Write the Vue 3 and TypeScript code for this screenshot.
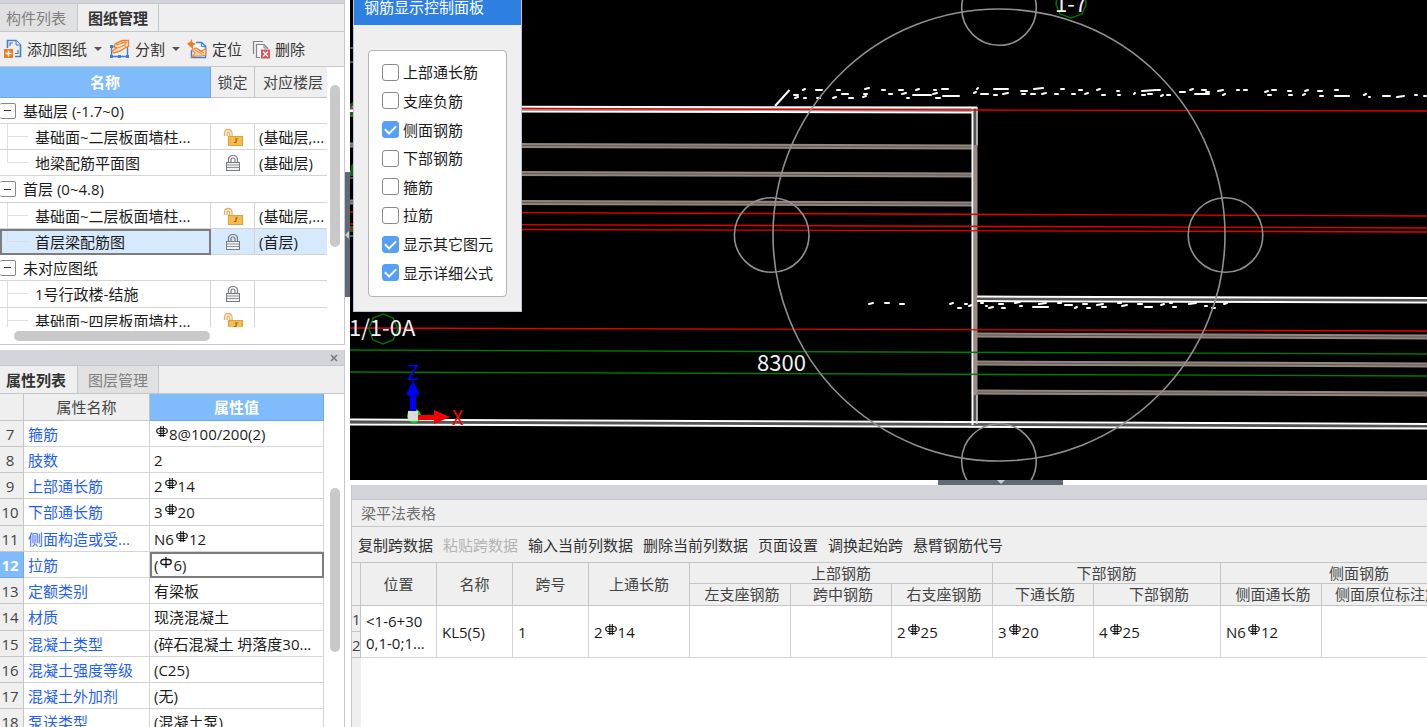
<script setup lang="ts">
import { ref } from 'vue'

interface TreeRow {
  kind: 'group' | 'leaf'
  name: string
  lock?: 'open' | 'closed'
  floor?: string
  last?: boolean
  selected?: boolean
}

const tree: TreeRow[] = [
  { kind: 'group', name: '基础层 (-1.7~0)' },
  { kind: 'leaf', name: '基础面~二层板面墙柱...', lock: 'open', floor: '(基础层,...' },
  { kind: 'leaf', name: '地梁配筋平面图', lock: 'closed', floor: '(基础层)', last: true },
  { kind: 'group', name: '首层 (0~4.8)' },
  { kind: 'leaf', name: '基础面~二层板面墙柱...', lock: 'open', floor: '(基础层,...' },
  { kind: 'leaf', name: '首层梁配筋图', lock: 'closed', floor: '(首层)', last: true, selected: true },
  { kind: 'group', name: '未对应图纸' },
  { kind: 'leaf', name: '1号行政楼-结施', lock: 'closed', floor: '' },
  { kind: 'leaf', name: '基础面~四层板面墙柱...', lock: 'open', floor: '' },
]

interface Prop {
  no: number
  name: string
  pre: string
  bar?: 'hrb' | 'hpb'
  post?: string
}

const props: Prop[] = [
  { no: 7, name: '箍筋', pre: '', bar: 'hrb', post: '8@100/200(2)' },
  { no: 8, name: '肢数', pre: '2' },
  { no: 9, name: '上部通长筋', pre: '2', bar: 'hrb', post: '14' },
  { no: 10, name: '下部通长筋', pre: '3', bar: 'hrb', post: '20' },
  { no: 11, name: '侧面构造或受...', pre: 'N6', bar: 'hrb', post: '12' },
  { no: 12, name: '拉筋', pre: '(', bar: 'hpb', post: '6)' },
  { no: 13, name: '定额类别', pre: '有梁板' },
  { no: 14, name: '材质', pre: '现浇混凝土' },
  { no: 15, name: '混凝土类型', pre: '(碎石混凝土 坍落度30...' },
  { no: 16, name: '混凝土强度等级', pre: '(C25)' },
  { no: 17, name: '混凝土外加剂', pre: '(无)' },
  { no: 18, name: '泵送类型', pre: '(混凝土泵)' },
]

const options = ref([
  { label: '上部通长筋', on: false },
  { label: '支座负筋', on: false },
  { label: '侧面钢筋', on: true },
  { label: '下部钢筋', on: false },
  { label: '箍筋', on: false },
  { label: '拉筋', on: false },
  { label: '显示其它图元', on: true },
  { label: '显示详细公式', on: true },
])

const actions = [
  { label: '复制跨数据', off: false },
  { label: '粘贴跨数据', off: true },
  { label: '输入当前列数据', off: false },
  { label: '删除当前列数据', off: false },
  { label: '页面设置', off: false },
  { label: '调换起始跨', off: false },
  { label: '悬臂钢筋代号', off: false },
]

const spanCells = [
  { pre: '2', post: '14' },
  { pre: '', post: '' },
  { pre: '', post: '' },
  { pre: '2', post: '25' },
  { pre: '3', post: '20' },
  { pre: '4', post: '25' },
  { pre: 'N6', post: '12' },
  { pre: '', post: '' },
]

// Rebar bands: [x1, y1, x2, y2] of the centre line
const bands = [
  [350, 145, 973, 147],
  [350, 173, 973, 175],
  [350, 202, 973, 204],
  [977, 335, 1427, 337],
  [977, 363, 1427, 365],
  [977, 392, 1427, 394],
]

const reds = [
  [350, 108, 976, 110],
  [976, 110, 1427, 111],
  [350, 212, 1427, 216],
  [350, 224, 1427, 228],
  [350, 229, 1427, 232],
  [350, 328, 1427, 331],
]

const greens = [
  [350, 350, 1427, 354],
  [350, 372, 1427, 376],
]

// Edge-on annotation text: [x, y, length]
const flecks = [
  [802, 90, 4], [815, 90, 8], [836, 90, 5], [864, 89, 6], [881, 90, 5], [898, 90, 6], [915, 90, 5], [933, 90, 4], [941, 89, 8], [976, 89, 3], [993, 89, 16], [1020, 91, 8], [1033, 89, 11], [1060, 89, 5], [1078, 90, 5], [1096, 90, 5], [1116, 91, 4],
  [793, 95, 6], [794, 98, 5], [803, 98, 4], [816, 98, 5], [832, 98, 5], [841, 94, 8], [848, 98, 6], [862, 97, 5], [863, 94, 5], [888, 94, 5], [901, 94, 6], [906, 98, 4], [912, 95, 20], [932, 94, 6], [942, 96, 18], [935, 98, 6], [973, 93, 4], [980, 94, 9], [993, 95, 5], [1002, 94, 7], [1021, 94, 5], [1030, 94, 6], [1041, 94, 6], [1054, 94, 5], [1071, 94, 5], [1084, 94, 5], [1101, 95, 5], [1117, 95, 4],
  [1141, 91, 16], [1156, 90, 5], [1179, 92, 7], [1189, 90, 5], [1201, 90, 6], [1205, 92, 5], [1217, 91, 7], [1236, 90, 4], [1243, 90, 5], [1264, 92, 5], [1271, 90, 6], [1287, 91, 5], [1304, 91, 5], [1317, 91, 6], [1334, 90, 5],
  [1133, 94, 3], [1141, 95, 5], [1147, 94, 6], [1160, 96, 4], [1166, 95, 5], [1194, 94, 16], [1222, 95, 4], [1267, 95, 5], [1288, 95, 5], [1302, 95, 4], [1319, 96, 5], [1334, 96, 16], [1363, 95, 4], [1368, 97, 3], [1382, 96, 9], [1396, 97, 9], [1414, 95, 4], [1423, 96, 4],
  [868, 304, 6], [884, 303, 6], [899, 304, 6], [949, 304, 5], [957, 308, 5], [964, 304, 4], [968, 306, 5], [980, 303, 4], [985, 306, 3], [988, 308, 6], [998, 304, 6], [1001, 308, 5], [1014, 303, 7], [1019, 306, 4], [1032, 307, 17], [1038, 304, 9], [1057, 303, 5], [1064, 305, 9], [1074, 308, 4], [1082, 304, 6], [1086, 308, 5], [1096, 305, 8], [1101, 307, 6], [1117, 303, 5], [1121, 306, 7], [1137, 304, 6], [1144, 307, 9], [1160, 305, 5], [1169, 303, 4], [1172, 307, 5], [1188, 304, 9], [1204, 306, 4], [1211, 308, 5], [1223, 304, 5],
]
</script>

<template>
  <div class="app">
    <svg class="defs" aria-hidden="true">
      <symbol id="hrb" viewBox="0 0 12 12">
        <path d="M3.500 2.500H8.500Q11.300 2.500 11.300 5T8.500 7.500H3.500Q0.700 7.500 0.700 5T3.500 2.500ZM4.800 0V11M7.300 0V11M3 5H9M2.500 9.500H9.500" fill="none" stroke="#111" stroke-width="1.100" />
      </symbol>
      <symbol id="hpb" viewBox="0 0 12 12">
        <path d="M3.500 2.500H8.500Q11.200 2.500 11.200 5T8.500 7.500H3.500Q0.800 7.500 0.800 5T3.500 2.500ZM6 0V11" fill="none" stroke="#111" stroke-width="1.300" />
      </symbol>
      <symbol id="lock-open" viewBox="0 0 20 18">
        <path d="M1.500 8V5Q1.500 1.500 5 1.500T9 5V8M4 8V5.500Q4 4 5.200 4T6.500 5.500V8" fill="none" stroke="#e9ad62" stroke-width="1.300" />
        <rect x="5.500" y="8.500" width="14" height="9" fill="#f7bb4c" stroke="#dda33c" />
        <path d="M12 11H14L13 12.500V14.500H11" fill="none" stroke="#946a25" stroke-width="1.200" />
      </symbol>
      <symbol id="lock-closed" viewBox="0 0 16 18">
        <path d="M3.500 8V5.500Q3.500 1.500 8 1.500T12.500 5.500V8M6 8V6Q6 4 8 4T10 6V8" fill="none" stroke="#777b80" stroke-width="1.200" />
        <rect x="1.500" y="8.500" width="13" height="8" fill="#f2f2f2" stroke="#777b80" />
        <path d="M2 11H14M2 13.500H14" stroke="#8d9095" stroke-width="1.200" />
      </symbol>
    </svg>

    <aside class="side">
      <section class="panel drawings">
        <div class="strip thin"></div>
        <nav class="tabs">
          <button type="button" class="tab">构件列表</button>
          <button type="button" class="tab second active">图纸管理</button>
        </nav>
        <div class="tools">
          <button type="button">
            <svg width="18" height="20" viewBox="0 0 18 20">
              <path d="M3.500 9V1.500H12L16.500 6V17.500H11" fill="none" stroke="#3b82d6" stroke-width="1.600" />
              <path d="M12 1.500V6H16.500" fill="#cfe2f7" stroke="#3b82d6" />
              <path d="M6 7V4H9M14 11V14.500H11" fill="none" stroke="#6b7480" stroke-width="1.200" />
              <rect x="0" y="10" width="9" height="9" fill="#f07b22" />
              <path d="M4.500 11.500V17.500M1.500 14.500H7.500" stroke="#fff" stroke-width="1.400" />
            </svg>
            添加图纸<i class="caret"></i>
          </button>
          <button type="button">
            <svg width="21" height="20" viewBox="0 0 21 20">
              <path d="M2.500 7.500H18.500V17.500H2.500Z" fill="none" stroke="#3b82d6" stroke-width="1.400" />
              <path d="M1 6H4V9H1ZM17 16H20V19H17ZM1 16H4V19H1ZM9 16H12V19H9Z" fill="#3b82d6" />
              <path d="M6 5L13 1.500H19.500V7L16 9L11 12L5 14L3 12L8 9L5 8Z" fill="#fbe3c8" stroke="#ee8435" stroke-width="1.400" />
              <path d="M7 6L14 4M9 9L16 6M12 3L18 4M16 2V8" fill="none" stroke="#ee8435" />
            </svg>
            分割<i class="caret"></i>
          </button>
          <button type="button">
            <svg width="20" height="20" viewBox="0 0 20 20">
              <path d="M4.500 11V18.500H18.500V7L14.500 3.500H9" fill="#f5f9fd" stroke="#3b82d6" stroke-width="1.500" />
              <path d="M14.500 3.500V7.500H18.500" fill="none" stroke="#3b82d6" />
              <path d="M5 0V3L9 5L6 6.500V10L3 7.500L0 4.500L3 3Z" fill="#f07b22" />
              <path d="M5 11L9 9L14 12L19 10V16L14 17H9L5 18L8 14Z" fill="#fbd5ad" stroke="#ee8435" stroke-width="1.200" />
              <path d="M8 11L15 15M12 11L17 14" stroke="#ee8435" />
            </svg>
            定位
          </button>
          <button type="button" class="delete">
            <svg width="18" height="19" viewBox="0 0 18 19">
              <path d="M1.500 14V1.500H11" fill="none" stroke="#80868e" stroke-width="1.200" />
              <path d="M8 17.500H4.500V4.500H12L15.500 8V9" fill="#f7f7f7" stroke="#80868e" stroke-width="1.200" />
              <path d="M12 4.500V8H15.500" fill="none" stroke="#80868e" />
              <rect x="9" y="9.500" width="9" height="9" fill="#d9555c" />
              <path d="M11 11.500L16 16.500M16 11.500L11 16.500" stroke="#fff" stroke-width="1.300" />
            </svg>
            删除
          </button>
        </div>
        <div class="tree-area">
          <div class="tree-clip">
            <table class="tree">
              <colgroup>
                <col class="c-name" />
                <col class="c-lock" />
                <col />
              </colgroup>
              <thead>
                <tr>
                  <th class="hot">名称</th>
                  <th>锁定</th>
                  <th class="floor-head">对应楼层</th>
                </tr>
              </thead>
              <tbody>
                <tr v-for="(row, i) in tree" :key="i" :class="{ selected: row.selected }">
                  <td v-if="row.kind === 'group'" colspan="3">
                    <div class="node">
                      <button type="button" class="toggle" aria-label="折叠"></button>
                      <span>{{ row.name }}</span>
                    </div>
                  </td>
                  <template v-else>
                    <td :class="{ focus: row.selected }">
                      <div class="node">
                        <svg class="branch" width="28" height="26" viewBox="0 0 28 26">
                          <path :d="row.last ? 'M7.500 0V12.500H28' : 'M7.500 0V26M7.500 12.500H28'" fill="none" stroke="#dedede" />
                        </svg>
                        <span>{{ row.name }}</span>
                      </div>
                    </td>
                    <td class="lock">
                      <svg v-if="row.lock === 'open'" width="20" height="18"><use href="#lock-open" /></svg>
                      <svg v-else width="16" height="18"><use href="#lock-closed" /></svg>
                    </td>
                    <td class="floor">{{ row.floor }}</td>
                  </template>
                </tr>
              </tbody>
            </table>
          </div>
          <div class="rail"><div class="thumb tree-thumb"></div></div>
        </div>
        <div class="hrail"><div class="hthumb"></div></div>
      </section>

      <section class="panel properties">
        <div class="strip closable">
          <button type="button" class="close" aria-label="关闭">
            <svg width="8" height="8" viewBox="0 0 8 8"><path d="M1 1L7 7M7 1L1 7" stroke="#777" stroke-width="1.500" /></svg>
          </button>
        </div>
        <nav class="tabs">
          <button type="button" class="tab active">属性列表</button>
          <button type="button" class="tab second">图层管理</button>
        </nav>
        <div class="prop-area">
          <table class="props">
            <colgroup>
              <col class="c-no" />
              <col class="c-prop" />
              <col />
            </colgroup>
            <thead>
              <tr>
                <th></th>
                <th>属性名称</th>
                <th class="hot">属性值</th>
              </tr>
            </thead>
            <tbody>
              <tr v-for="p in props" :key="p.no">
                <th scope="row" :class="{ hot: p.no === 12 }">{{ p.no }}</th>
                <td class="pname">{{ p.name }}</td>
                <td :class="{ focus: p.no === 12 }">{{ p.pre }}<svg v-if="p.bar" class="bar" width="12" height="12"><use :href="'#' + p.bar" /></svg>{{ p.post }}</td>
              </tr>
            </tbody>
          </table>
          <div class="rail"><div class="thumb prop-thumb"></div></div>
        </div>
      </section>
    </aside>

    <div class="vsplit"><span class="grip"></span></div>

    <main class="work">
      <div class="viewport">
        <svg class="scene" viewBox="350 0 1077 480" preserveAspectRatio="xMinYMin slice">
          <g stroke="#93867f" stroke-width="5">
            <path v-for="(b, i) in bands" :key="i" :d="`M${b[0]} ${b[1]}L${b[2]} ${b[3]}`" />
          </g>
          <g stroke="#625853" stroke-width="1">
            <path v-for="(b, i) in bands" :key="i" :d="`M${b[0]} ${b[1]}L${b[2]} ${b[3]}`" />
          </g>
          <path d="M975.500 145V395" stroke="#9a8c86" stroke-width="4" />
          <path d="M350 108.500L977 110" stroke="#aaa" stroke-width="3" />
          <path d="M977 298.500L1427 300M350 422L1427 426.500" stroke="#555" stroke-width="3" />
          <path d="M975 108V145M975 395V424" stroke="#555" stroke-width="3" />
          <g fill="none" stroke="#fff" stroke-width="2">
            <path d="M350 106.500L977 107.500M350 111L972 112.500" />
            <path d="M972.500 107V425" />
            <path d="M977 296.500L1427 298M977 301L1427 302.500" />
            <path d="M350 419.500L1427 424M350 424.500L1427 428.500" />
            <path d="M775 106L789.500 90" />
          </g>
          <path d="M977 107V145M977 395V424" stroke="#ddd" stroke-width="1.500" />
          <path d="M350 48H354M350 62H354M350 116H354M350 178H354M350 236H354" stroke="#aaa" />
          <path d="M350 104L353 102V106L350 109ZM350 112H353V115H350ZM351 166L353 163V175H350ZM350 226H353V232H350Z" fill="#0a6a0a" />
          <g stroke="#e80000" stroke-width="1.400">
            <path v-for="(r, i) in reds" :key="i" :d="`M${r[0]} ${r[1]}L${r[2]} ${r[3]}`" />
          </g>
          <g stroke="#007c00" stroke-width="1.400">
            <path v-for="(g, i) in greens" :key="i" :d="`M${g[0]} ${g[1]}L${g[2]} ${g[3]}`" />
          </g>
          <g stroke="#fff" stroke-width="2" stroke-linecap="round">
            <path v-for="(f, i) in flecks" :key="i" :d="`M${f[0] + 1} ${f[1]}l${f[2] - 2} ${i % 3 === 0 ? -1 : 0}`" />
          </g>
          <g fill="none" stroke="#909090" stroke-width="1.600">
            <circle cx="999" cy="235" r="226" />
            <circle cx="999" cy="8" r="37.300" />
            <circle cx="999" cy="461" r="37.300" />
            <circle cx="771.700" cy="235" r="37.300" />
            <circle cx="1225.500" cy="235" r="37.300" />
          </g>
          <g fill="none" stroke="#007200" stroke-width="1.500">
            <path d="M383 314L393 318L398 329L393 340L383 344L373 340L369 329L373 318Z" />
            <path d="M1057 -4L1056 5L1060 14L1071 18L1082 14L1086 5L1085 -4" />
          </g>
          <g class="dim">
            <text x="349" y="336">1/1-0A</text>
            <text x="757" y="371">8300</text>
            <text x="1055" y="12">1-7</text>
          </g>
          <circle cx="414" cy="416" r="7" fill="#00e020" />
          <path d="M410 411V395H406L413 380L420 395H416V411Z" fill="#0000f5" />
          <path d="M418 415H434V410L450 417L434 424V420H418Z" fill="#f50000" />
          <rect x="408" y="411" width="10" height="10" fill="#dcdcdc" />
          <g class="axis">
            <text x="407" y="380" fill="#0000f5">Z</text>
            <text x="452" y="425" fill="#f50000">X</text>
          </g>
        </svg>

        <div class="dialog" role="dialog" aria-label="钢筋显示控制面板">
          <header>钢筋显示控制面板</header>
          <div class="body">
            <div class="box">
              <label v-for="o in options" :key="o.label">
                <input v-model="o.on" type="checkbox" />{{ o.label }}
              </label>
            </div>
          </div>
        </div>
      </div>

      <div class="hsplit"><span class="grip"></span></div>

      <section class="sheet">
        <div class="strip"></div>
        <h2>梁平法表格</h2>
        <div class="actions">
          <button v-for="a in actions" :key="a.label" type="button" :disabled="a.off">{{ a.label }}</button>
        </div>
        <div class="grid-clip">
          <table class="spans">
            <colgroup>
              <col class="w-no" />
              <col class="w-s" /><col class="w-s" /><col class="w-s" />
              <col class="w-m" /><col class="w-m" /><col class="w-m" /><col class="w-m" /><col class="w-m" />
              <col class="w-l" /><col class="w-m" /><col class="w-xl" />
            </colgroup>
            <thead>
              <tr>
                <th rowspan="2"></th>
                <th rowspan="2">位置</th>
                <th rowspan="2">名称</th>
                <th rowspan="2">跨号</th>
                <th rowspan="2">上通长筋</th>
                <th colspan="3">上部钢筋</th>
                <th colspan="2">下部钢筋</th>
                <th colspan="2">侧面钢筋</th>
              </tr>
              <tr class="sub">
                <th>左支座钢筋</th>
                <th>跨中钢筋</th>
                <th>右支座钢筋</th>
                <th>下通长筋</th>
                <th>下部钢筋</th>
                <th>侧面通长筋</th>
                <th class="start">侧面原位标注筋</th>
              </tr>
            </thead>
            <tbody>
              <tr>
                <th scope="row">1</th>
                <td rowspan="2" class="pos">&lt;1-6+30<br />0,1-0;1...</td>
                <td rowspan="2">KL5(5)</td>
                <td rowspan="2">1</td>
                <td v-for="(c, i) in spanCells" :key="i" rowspan="2">
                  <template v-if="c.pre">{{ c.pre }}<svg class="bar" width="12" height="12"><use href="#hrb" /></svg>{{ c.post }}</template>
                </td>
              </tr>
              <tr>
                <th scope="row">2</th>
              </tr>
            </tbody>
          </table>
          <div class="gutter"></div>
        </div>
      </section>
    </main>
  </div>
</template>

<style>
body {
  margin: 0;
  background: #fff;
}
</style>

<style scoped>
.app {
  display: flex;
  height: 100vh;
  overflow: hidden;
  color: #1c1c1c;
  font-family: "Open Sans", "Noto Sans CJK SC", sans-serif;
  font-size: 15px;
  line-height: 20px;
  white-space: nowrap;
}
.app * {
  box-sizing: border-box;
}
.defs {
  position: absolute;
  width: 0;
  height: 0;
}
button {
  margin: 0;
  padding: 0;
  border: 0;
  background: none;
  color: inherit;
  font: inherit;
}
svg {
  flex: none;
}
table {
  border-collapse: separate;
  border-spacing: 0;
  table-layout: fixed;
}
th,
td {
  padding: 0;
  border: 0 solid #d4d4d4;
  border-width: 0 1px 1px 0;
  text-align: left;
  font-weight: 400;
  overflow: hidden;
}
th {
  background: #efefef;
  border-color: #c4c4c4;
  color: #444;
  text-align: center;
}
th.hot {
  background: #80bbfb;
  border-color: #6ba9ee;
  color: #fff;
  font-weight: 700;
}

.side {
  display: flex;
  flex: none;
  flex-direction: column;
  gap: 5px;
  width: 345px;
}
.panel {
  display: flex;
  flex-direction: column;
  border-right: 1px solid #c6c8cc;
  overflow: hidden;
}
.drawings {
  flex: none;
  border-bottom: 1px solid #c6c8cc;
}
.properties {
  flex: 1;
  min-height: 0;
}
.strip {
  flex: none;
  height: 15px;
  background: #d3d5db;
  border-bottom: 1px solid #c3c6cd;
}
.strip.thin {
  height: 4px;
}
.strip.closable {
  display: flex;
  justify-content: flex-end;
  align-items: center;
  height: 16px;
  padding-right: 6px;
}
.close {
  display: flex;
}
.tabs {
  display: flex;
  flex: none;
  height: 28px;
  background: #efefef;
  border-bottom: 1px solid #c3c6cd;
}
.tab {
  width: 78px;
  padding-left: 6px;
  border-right: 1px solid #c3c6cd;
  background: #e1e1e1;
  color: #808080;
  text-align: left;
}
.tab.second {
  width: 81px;
  padding-left: 10px;
}
.tab.active {
  background: #efefef;
  color: #333;
  font-weight: 700;
}
.tools {
  display: flex;
  gap: 7px;
  height: 35px;
  padding-left: 4px;
  background: #efefef;
  border-bottom: 1px solid #c8c8c8;
  color: #333;
}
.tools button {
  display: flex;
  align-items: center;
  gap: 5px;
}
.tools .delete {
  padding-left: 3px;
}
.caret {
  margin-left: 2px;
  border: 4px solid transparent;
  border-top-color: #555;
  border-bottom: 0;
}

.tree-area,
.prop-area {
  display: flex;
}
.tree-area {
  height: 260px;
}
.tree-clip {
  flex: 1;
  overflow: hidden;
}
.tree {
  width: 100%;
}
.c-name {
  width: 211px;
}
.c-lock {
  width: 44px;
}
.tree th {
  height: 31px;
}
.tree th.floor-head {
  padding-left: 4px;
  border-right: 0;
}
.tree td {
  height: 26px;
}
.tree tbody tr:nth-child(4n) td {
  height: 27px;
}
.tree td:last-child {
  border-right: 0;
}
.tree td.floor {
  padding-left: 4px;
}
.tree .selected td {
  background: #d6e9fd;
}
td.focus {
  outline: 2px solid #7d7d7d;
  outline-offset: -2px;
}
.node {
  display: flex;
  align-items: center;
  gap: 7px;
  height: 25px;
}
.toggle {
  display: flex;
  align-items: center;
  justify-content: center;
  width: 16px;
  height: 16px;
  border: 1px solid #888;
  border-left: 0;
  border-radius: 2px;
  background: #fff;
}
.toggle::before {
  content: "";
  width: 7px;
  height: 1px;
  background: #333;
}
.lock svg {
  display: block;
  margin: 0 auto;
}
.rail {
  flex: none;
  width: 17px;
  padding-left: 3px;
}
.thumb {
  width: 10px;
  border-radius: 5px;
  background: #c9c9c9;
}
.tree-thumb {
  height: 162px;
  margin-top: 18px;
}
.hrail {
  height: 17px;
  padding: 4px 0 0 14px;
}
.hthumb {
  width: 196px;
  height: 10px;
  border-radius: 5px;
  background: #c9c9c9;
}

.prop-area {
  flex: 1;
  align-items: flex-start;
}
.props {
  flex: 1;
  min-width: 0;
  margin-right: 3px;
}
.c-no {
  width: 24px;
}
.c-prop {
  width: 126px;
}
.props thead th {
  height: 27px;
}
.props tbody tr {
  height: 26px;
}
.props tbody tr:nth-child(4n) {
  height: 27px;
}
.props tbody th {
  padding-right: 3px;
}
.props td {
  padding-left: 4px;
}
.props .pname {
  color: #1f5eff;
}
.bar {
  margin: 0 1px 0 2px;
  vertical-align: 2px;
}
.prop-thumb {
  height: 164px;
  margin-top: 94px;
}

.vsplit {
  display: flex;
  flex: none;
  flex-direction: column;
  width: 5px;
}
.vsplit .grip {
  display: flex;
  align-items: center;
  height: 125px;
  margin-top: 172px;
  background: #5f6a76;
}
.vsplit .grip::before {
  content: "";
  border: 4px solid transparent;
  border-right-color: #c9cdd2;
  border-left: 0;
}

.work {
  display: flex;
  flex: 1;
  flex-direction: column;
  min-width: 0;
}
.viewport {
  position: relative;
  flex: 1;
  min-height: 0;
  background: #000;
  overflow: hidden;
}
.scene {
  display: block;
  width: 100%;
  height: 100%;
}
.dim text {
  fill: #f2f2f2;
  font-family: "Noto Sans CJK SC", sans-serif;
  font-size: 22px;
}
.axis text {
  font-family: "Noto Sans CJK SC", sans-serif;
  font-size: 20px;
}
.dialog {
  position: absolute;
  top: -10px;
  left: 3px;
  width: 169px;
  border: 1px solid #bcc4d4;
  background: #efefef;
}
.dialog header {
  height: 34px;
  padding: 6px 0 0 10px;
  background: #2d7fe2;
  color: #fff;
}
.dialog .body {
  padding: 25px 14px 14px;
}
.box {
  display: grid;
  grid-auto-rows: 1fr;
  height: 247px;
  padding: 7px 0 9px 13px;
  border: 1px solid #b5b5b5;
  border-radius: 4px;
  background: #fff;
}
.box label {
  display: flex;
  align-items: center;
  gap: 4px;
}
.box input {
  display: flex;
  justify-content: center;
  width: 17px;
  height: 17px;
  margin: 0;
  appearance: none;
  border: 1px solid #8a8a8a;
  border-radius: 3px;
  background: #fff;
}
.box input:checked {
  border-color: #559ff5;
  background: #559ff5;
}
.box input:checked::before {
  content: "";
  width: 5px;
  height: 9px;
  margin-top: 1px;
  border: solid #fff;
  border-width: 0 2px 2px 0;
  transform: rotate(45deg);
}

.hsplit {
  display: flex;
  flex: none;
  justify-content: center;
  height: 5px;
  padding-left: 224px;
}
.hsplit .grip {
  display: flex;
  justify-content: center;
  width: 125px;
  background: #5f6a76;
}
.hsplit .grip::before {
  content: "";
  height: 0;
  border: 4px solid transparent;
  border-top-color: #c9cdd2;
  border-bottom: 0;
}
.sheet {
  display: flex;
  flex: none;
  flex-direction: column;
  height: 242px;
  margin-left: 1px;
  border-left: 1px solid #c6c8cc;
}
.sheet h2 {
  height: 27px;
  margin: 0;
  padding: 3px 0 0 9px;
  background: #efefef;
  border-bottom: 1px solid #c3c6cd;
  color: #707070;
  font-size: 15px;
  font-weight: 400;
}
.actions {
  display: flex;
  gap: 10px;
  height: 36px;
  padding-left: 6px;
  background: #efefef;
  border-bottom: 1px solid #c4c4c4;
  color: #333;
}
.actions button:disabled {
  color: #b4b4b4;
}
.grid-clip {
  display: flex;
  flex: 1;
  flex-direction: column;
  overflow: hidden;
}
.spans {
  flex: none;
  width: 1145px;
}
.w-no {
  width: 9px;
}
.w-s {
  width: 76px;
}
.w-m {
  width: 101px;
}
.w-l {
  width: 127px;
}
.w-xl {
  width: 176px;
}
.spans thead tr {
  height: 21px;
}
.spans thead tr.sub {
  height: 22px;
}
.spans thead th {
  line-height: 19px;
}
.spans thead .sub th {
  padding-left: 4px;
}
.spans thead .sub th.start {
  padding-left: 13px;
  text-align: left;
}
.spans tbody tr {
  height: 26px;
}
.spans tbody th {
  text-align: left;
}
.spans td {
  padding-left: 5px;
}
.spans td.pos {
  line-height: 22px;
}
.gutter {
  flex: 1;
  width: 9px;
  background: #efefef;
}
</style>
